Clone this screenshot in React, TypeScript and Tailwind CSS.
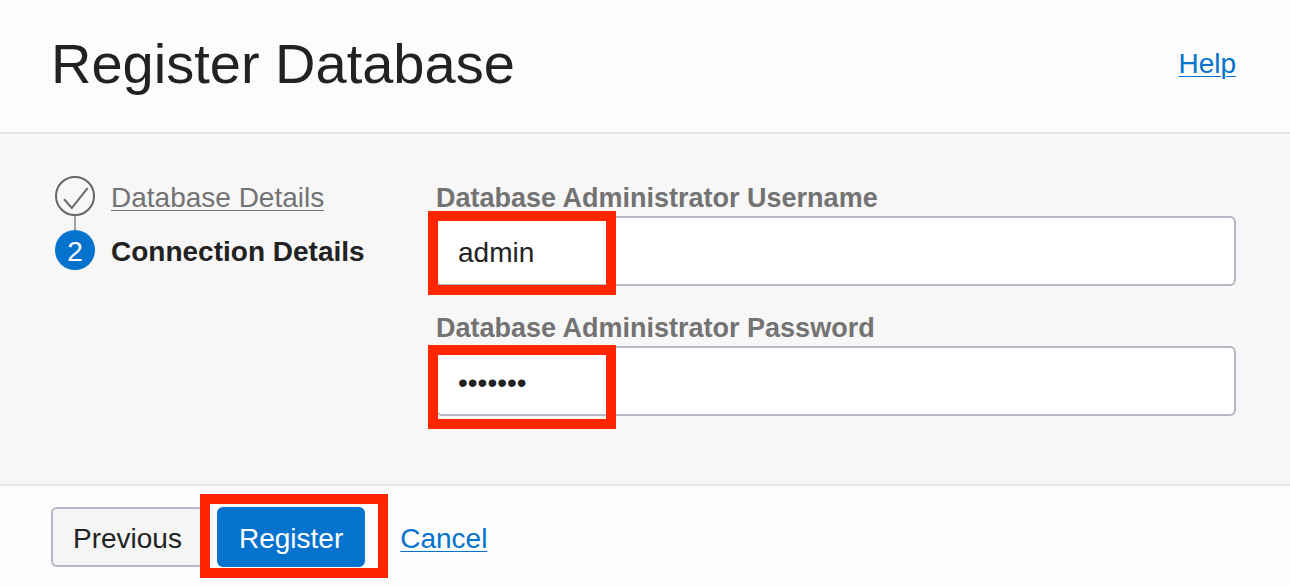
import { useId, useState, type ReactNode } from "react";

function Highlight({ className }: { className: string }) {
  return (
    <span
      aria-hidden="true"
      className={`pointer-events-none absolute z-10 h-[84px] w-[188px] border-[10px] border-[#ff2600] ${className}`}
    />
  );
}

function TextLink({ children, className }: { children: ReactNode; className: string }) {
  return (
    <a href="#" className={`underline decoration-1 underline-offset-3 ${className}`}>
      {children}
    </a>
  );
}

type FieldProps = {
  label: string;
  type: string;
  initial: string;
  highlight: string;
};

function Field({ label, type, initial, highlight }: FieldProps) {
  const id = useId();
  const [value, setValue] = useState(initial);
  return (
    <div className="flex flex-col">
      <label htmlFor={id} className="h-10 text-[27px] leading-11 font-bold text-[#737373]">
        {label}
      </label>
      <div className="relative">
        <input
          id={id}
          type={type}
          value={value}
          onChange={(event) => setValue(event.target.value)}
          className="block h-[70px] w-full rounded-md border-2 border-[#b3b9c4] bg-white px-5 pt-1 text-[#222222] outline-none"
        />
        <Highlight className={highlight} />
      </div>
    </div>
  );
}

export default function App() {
  return (
    <main className="bg-[#fcfcfc] font-['Liberation_Sans',Arial,sans-serif] text-[28px] leading-10 text-[#222222]">
      <header className="flex items-center justify-between border-b-2 border-[#e5e5e5] pt-8 pr-[54px] pb-9 pl-[51px]">
        <h1 className="text-[56px] leading-16">Register Database</h1>
        <TextLink className="text-[#0572ce]">Help</TextLink>
      </header>

      <div className="flex bg-[#f7f7f7] pt-[42px] pr-[54px] pb-[68px] pl-[55px]">
        <ol className="w-[381px] shrink-0">
          <li className="flex gap-4">
            <span className="flex flex-col items-center">
              <svg viewBox="0 0 40 40" className="size-10" fill="none" stroke="#666666" aria-hidden="true">
                <circle cx="20" cy="20" r="19" strokeWidth="2" />
                <path d="M9 23.2 16.8 32 32.6 12.2" strokeWidth="2" />
              </svg>
              <span className="h-[14px] w-[2px] bg-[#a0a0a0]" />
            </span>
            <TextLink className="self-start leading-11 text-[#737373]">Database Details</TextLink>
          </li>
          <li className="flex gap-4" aria-current="step">
            <span className="flex size-10 items-center justify-center rounded-full bg-[#0572ce] pt-1 text-white">
              2
            </span>
            <span className="leading-11 font-bold">Connection Details</span>
          </li>
        </ol>

        <form id="connection" className="flex grow flex-col gap-5" onSubmit={(event) => event.preventDefault()}>
          <Field
            label="Database Administrator Username"
            type="text"
            initial="admin"
            highlight="-top-[5px] -left-2"
          />
          <Field
            label="Database Administrator Password"
            type="password"
            initial="welcome"
            highlight="-top-px -left-2"
          />
        </form>
      </div>

      <footer className="flex items-center border-t-2 border-[#e5e5e5] pt-[21px] pr-[54px] pb-[19px] pl-[51px]">
        <button
          type="button"
          className="mr-[13px] h-[60px] rounded-md border-2 border-[#b3b9c4] bg-[#f5f5f5] px-5 pt-1"
        >
          Previous
        </button>
        <div className="relative mr-[35px]">
          <button
            type="submit"
            form="connection"
            className="block h-[60px] rounded-md border-2 border-[#0572ce] bg-[#0572ce] px-5 pt-1 text-white"
          >
            Register
          </button>
          <Highlight className="-top-[13px] -left-[17px]" />
        </div>
        <TextLink className="pt-1 text-[#0572ce]">Cancel</TextLink>
      </footer>
    </main>
  );
}
